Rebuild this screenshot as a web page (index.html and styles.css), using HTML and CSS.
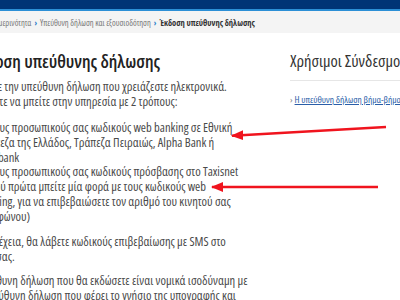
FILE: index.html
```html
<!DOCTYPE html>
<html lang="el">
  <head>
    <meta charset="UTF-8" />
    <meta name="viewport" content="width=device-width, initial-scale=1.0" />
    <title>Έκδοση υπεύθυνης δήλωσης</title>
    <link rel="stylesheet" href="styles.css">
  </head>
  <body>
    <header class="topbar"></header>

    <nav class="crumbs">
      <span>Πολίτης και καθημερινότητα</span>
      <span class="sep">›</span>
      <span>Υπεύθυνη δήλωση και εξουσιοδότηση</span>
      <span class="sep">›</span>
      <span class="current">Έκδοση υπεύθυνης δήλωσης</span>
    </nav>

    <div class="layout">
      <main class="main">
        <h1>Έκδοση υπεύθυνης δήλωσης</h1>
        <p>Εκδώστε την υπεύθυνη δήλωση που χρειάζεστε ηλεκτρονικά.<br>
          Μπορείτε να μπείτε στην υπηρεσία με 2 τρόπους:</p>
        <ul class="ways">
          <li>με τους προσωπικούς σας κωδικούς web banking σε Εθνική Τράπεζα της Ελλάδος, Τράπεζα Πειραιώς, Alpha Bank ή Eurobank</li>
          <li>με τους προσωπικούς σας κωδικούς πρόσβασης στο Taxisnet (αφού πρώτα μπείτε μία φορά με τους κωδικούς web banking, για να επιβεβαιώσετε τον αριθμό του κινητού σας τηλεφώνου)</li>
        </ul>
        <p>Στη συνέχεια, θα λάβετε κωδικούς επιβεβαίωσης με SMS στο κινητό σας.</p>
        <p>Η υπεύθυνη δήλωση που θα εκδώσετε είναι νομικά ισοδύναμη με την υπεύθυνη δήλωση που φέρει το γνήσιο της υπογραφής και</p>
      </main>

      <aside class="side">
        <h2>Χρήσιμοι Σύνδεσμοι</h2>
        <ul class="links">
          <li><a href="#">Η υπεύθυνη δήλωση βήμα-βήμα</a></li>
        </ul>
      </aside>
    </div>

    <svg class="arrows" width="400" height="300" viewBox="0 0 400 300">
      <defs>
        <marker id="head" markerWidth="5" markerHeight="4" refX="4.5" refY="2" orient="auto" markerUnits="strokeWidth">
          <path d="M0,0 L5,2 L0,4 z" fill="#f0141e" />
        </marker>
      </defs>
      <line x1="386" y1="127" x2="232" y2="135.8" stroke="#f0141e" stroke-width="2.5" marker-end="url(#head)" />
      <line x1="378" y1="187" x2="212" y2="187" stroke="#f0141e" stroke-width="2.5" marker-end="url(#head)" />
    </svg>
  </body>
</html>
```

FILE: styles.css
```css
body {
  margin: 0;
  width: 400px;
  height: 300px;
  overflow: hidden;
  position: relative;
  background-color: #fff;
  font-family: "Open Sans", "Noto Sans", sans-serif;
  font-stretch: 75%;
  color: #4a4a4a;
}

.topbar {
  height: 9px;
  background-color: #003476;
  border-bottom: 2px solid #2c8fd6;
}

.crumbs {
  display: flex;
  align-items: center;
  gap: 3px;
  height: 22px;
  margin-left: -52px;
  background-color: #f4f4f4;
  font-size: 8.5px;
  color: #777;
  white-space: nowrap;
}

.crumbs .sep {
  color: #2a7bc8;
  font-weight: bold;
}

.crumbs .current {
  color: #333;
  font-weight: bold;
}

.layout {
  display: flex;
  gap: 38px;
  margin-left: -34px;
}

.main {
  flex: 0 0 286px;
}

h1 {
  margin: 16px 0 6px 4px;
  font-size: 18px;
  font-weight: 600;
  color: #222;
}

.main p,
.ways li {
  margin: 0 0 9px;
  font-size: 12.5px;
  line-height: 15px;
}

.ways {
  margin: 12px 0 9px;
  padding: 0 9px 0 12px;
  list-style: none;
}

.ways li {
  margin: 0;
  line-height: 14.8px;
}

.side {
  flex: 0 0 150px;
}

h2 {
  margin: 16px 0 0;
  padding-bottom: 8px;
  border-bottom: 1px solid #e6e6e6;
  font-size: 16.5px;
  font-weight: 400;
  color: #333;
  white-space: nowrap;
}

.links {
  margin: 12px 0 0;
  padding: 0;
  list-style: none;
  font-size: 9.5px;
  white-space: nowrap;
}

.links li::before {
  content: "›";
  margin-right: 2px;
  color: #888;
}

.links a {
  color: #2a5ea8;
}

.arrows {
  position: absolute;
  top: 0;
  left: 0;
}
```
